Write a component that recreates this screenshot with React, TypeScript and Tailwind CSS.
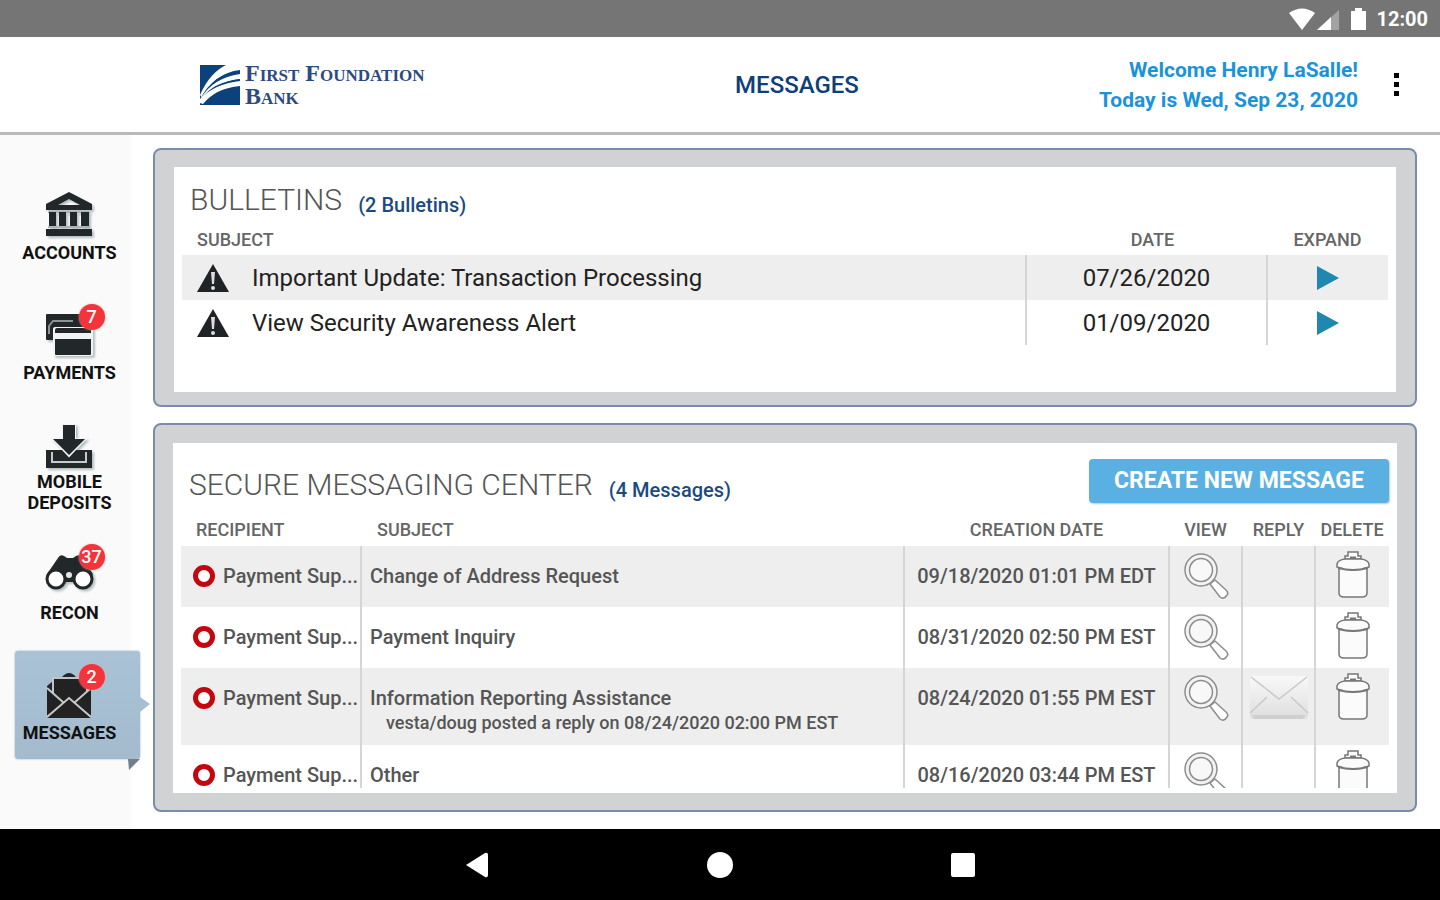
import type { ReactNode } from 'react';

const bulletins = [
  { subject: 'Important Update: Transaction Processing', date: '07/26/2020' },
  { subject: 'View Security Awareness Alert', date: '01/09/2020' },
];

const messages = [
  { recipient: 'Payment Sup...', subject: 'Change of Address Request', date: '09/18/2020 01:01 PM EDT' },
  { recipient: 'Payment Sup...', subject: 'Payment Inquiry', date: '08/31/2020 02:50 PM EST' },
  {
    recipient: 'Payment Sup...',
    subject: 'Information Reporting Assistance',
    note: 'vesta/doug posted a reply on 08/24/2020 02:00 PM EST',
    date: '08/24/2020 01:55 PM EST',
    reply: true,
  },
  { recipient: 'Payment Sup...', subject: 'Other', date: '08/16/2020 03:44 PM EST' },
];

function BankIcon() {
  return (
    <svg viewBox="0 0 50 46" className="h-[46px] w-[50px] drop-shadow-[2px_2px_1px_#b5bfc0]" fill="#22282a">
      <path fillRule="evenodd" d="M24 0 47 12v6H1v-6L24 0Zm0 7-11 6h22L24 7Z" />
      <path d="M3 19h42v2H3zM3 34h42v2H3z" fill="#aab2b3" />
      <path d="M4 20h7v14H4zM14 20h7v14h-7zM25 20h7v14h-7zM36 20h8v14h-8zM1 37h46v7H1z" />
    </svg>
  );
}

function CardsIcon() {
  return (
    <svg viewBox="0 0 50 46" className="h-[46px] w-[50px] drop-shadow-[2px_2px_1px_#b5bfc0]">
      <rect x="1" y="2" width="42" height="26" rx="1" fill="#22282a" />
      <path d="M4 22v-8l4-5h20" fill="none" stroke="#8a9294" strokeWidth="2" />
      <rect x="8" y="15" width="40" height="29" rx="2" fill="#f1f4f4" />
      <path d="M10 18q0-2 2-2h32q2 0 2 2v3H10zM10 27h36v15q0 1-1 1H11q-1 0-1-1z" fill="#22282a" />
    </svg>
  );
}

function DepositIcon() {
  return (
    <svg
      viewBox="0 0 50 46"
      className="h-[46px] w-[50px] overflow-visible drop-shadow-[2px_2px_1px_#b5bfc0]"
      fill="#22282a"
    >
      <path d="M1 29h46v18H1z" />
      <path d="M7 31v10h34V31" fill="none" stroke="#c3cbcc" strokeWidth="2" />
      <path d="M18 4h12v14h10L24 35 8 18h10z" stroke="#f4f6f6" strokeWidth="2" />
      <path d="M18 4h12v14h10L24 34 8 18h10z" />
    </svg>
  );
}

function BinocularsIcon() {
  return (
    <svg viewBox="0 0 50 46" className="h-[46px] w-[50px] drop-shadow-[2px_2px_1px_#b5bfc0]">
      <path d="M2 22 13 6q2-4 6-2l3 2h6l3-2q4-2 6 2l11 16-9 8H11z" fill="#22282a" />
      <circle cx="11" cy="27" r="9" fill="#fff" stroke="#22282a" strokeWidth="3" />
      <circle cx="38" cy="27" r="9" fill="#fff" stroke="#22282a" strokeWidth="3" />
      <circle cx="24" cy="23" r="4" fill="#e3e7e8" stroke="#22282a" strokeWidth="2" />
    </svg>
  );
}

function EnvelopeIcon() {
  return (
    <svg viewBox="0 0 50 46" className="h-[46px] w-[50px]">
      <path d="M17 5q7-8 14 0zM2 18v-4l6-5v12zM46 18v-4l-6-5v12z" fill="#22282a" />
      <path d="M8 6h34v22L24 42 8 28z" fill="#222" stroke="#bfc5c6" strokeWidth="2" />
      <path d="M2 17 19 31 2 44zM46 17 29 31l17 13z" fill="#222" />
      <path d="m2 46 22-20 22 20z" fill="#222" />
      <path d="m2 16 17 15M46 16 29 31M2 45l22-19 22 19" fill="none" stroke="#c4c8c8" strokeWidth="2" />
    </svg>
  );
}

function WarningIcon() {
  return (
    <svg viewBox="0 0 34 30" className="h-[30px] w-[34px]">
      <path d="m17 1 16 28H1z" fill="#1f2325" />
      <path d="M15 9h4l-1 12h-2z" fill="#ddd" />
      <circle cx="17" cy="25" r="2" fill="#ddd" />
    </svg>
  );
}

function MagnifierIcon() {
  return (
    <svg viewBox="0 0 46 46" className="h-[46px] w-[46px]" fill="none" stroke="#8d8d8d" strokeWidth="1.5">
      <circle cx="18" cy="17" r="16" fill="#f3f3f3" />
      <circle cx="18" cy="17" r="11.5" fill="#f8f8f8" />
      <path d="m27 31 5-4 11 10q3 3 1 5-3 5-7 2z" fill="#fff" strokeLinejoin="round" />
    </svg>
  );
}

function TrashIcon() {
  return (
    <svg viewBox="0 0 36 48" className="h-[48px] w-[36px]" fill="#fbfbfb" stroke="#777" strokeWidth="1.5">
      <path d="M4 17v25q0 4 5 4h18q5 0 5-4V17z" />
      <path d="M10 8V5h3V1h10v4h3v3z" />
      <path d="M15 7h6" strokeWidth="3" />
      <path d="M2 13q1-4 8-5h16q7 1 8 5v3q-8 3-16 3T2 16z" />
      <path d="M3 17q8 2 15 2t15-2" strokeWidth="2" />
    </svg>
  );
}

function ReplyIcon() {
  return (
    <svg viewBox="0 0 60 46" className="h-[46px] w-[60px]">
      <defs>
        <linearGradient id="paper" x1="0" y1="0" x2="0" y2="1">
          <stop offset="0" stopColor="#f8f8f8" />
          <stop offset="1" stopColor="#dedede" />
        </linearGradient>
      </defs>
      <rect x="1" y="1" width="58" height="43" rx="3" fill="url(#paper)" />
      <path d="M3 40h54l-3 4H5z" fill="#cfcfcf" />
      <path d="m2 2 28 22L58 2M1 38l17-16M59 38 42 22" fill="none" stroke="#c9c9c9" strokeWidth="1.5" />
    </svg>
  );
}

function BankLogo() {
  return (
    <div className="ml-[14px] flex items-center gap-[5px] text-[#2c4a80]">
      <svg viewBox="0 0 40 42" className="h-[42px] w-10">
        <path d="M0 1h40v40H0z" fill="#0b427c" />
        <path d="M0 31Q10 8 28 0h12v6Q14 9 2 34z" fill="#fff" />
        <path d="M1 34Q12 11 40 7v4Q14 15 2 36z" fill="#0b427c" />
        <path d="M1 34Q13 14 40 10v5Q14 18 1 38z" fill="#fff" />
        <path d="M1 35Q13 18 40 15v2Q15 21 1 38z" fill="#0b427c" />
        <path d="M0 35Q14 20 40 17v5Q16 24 3 40l-3-1z" fill="#fff" />
      </svg>
      <div className="flex flex-col font-['Liberation_Serif'] text-[24px] leading-[23px] font-bold [font-variant-caps:small-caps]">
        <span>First Foundation</span>
        <span>Bank</span>
      </div>
    </div>
  );
}

function NavItem({ label, icon, badge, active }: { label: string; icon: ReactNode; badge?: number; active?: boolean }) {
  return (
    <a
      href="#"
      aria-current={active ? 'page' : undefined}
      className={`relative flex h-[108px] w-[125px] flex-col items-center justify-center gap-1 rounded-[3px] pt-1 pr-4 text-center text-[18px] leading-[21px] font-bold text-[#111] ${
        active ? 'bg-linear-to-b from-[#a9c2d5] to-[#a3bbcd] shadow-[0_0_2px_#8fa5b5]' : ''
      }`}
    >
      <span className="relative">
        {icon}
        {badge && (
          <span className="absolute -top-2 left-[34px] flex h-[26px] w-[26px] items-center justify-center rounded-full bg-[#f5333b] text-[18px] font-medium text-white shadow-[0_0_2px_#f5a0a0]">
            {badge}
          </span>
        )}
      </span>
      <span className="w-[100px]">{label}</span>
      {active && (
        <svg viewBox="0 0 22 74" className="absolute top-[46px] left-[113px] h-[74px] w-[22px]">
          <path d="m12 0 10 7-10 8z" fill="#a5bed1" />
          <path d="M0 62h12L1 73z" fill="#6f7f8b" />
        </svg>
      )}
    </a>
  );
}

function Panel({ className, children }: { className: string; children: ReactNode }) {
  return (
    <section className={`rounded-lg border-2 border-[#7a8bab] bg-[#d0d2d3] ${className}`}>
      <div className="bg-white px-2">{children}</div>
    </section>
  );
}

export default function App() {
  return (
    <div className="flex min-h-screen flex-col bg-white font-['Roboto',sans-serif]">
      <div className="flex h-[37px] items-center justify-end bg-[#757575] pr-3 text-[20px] font-bold text-white">
        <svg viewBox="0 0 78 24" className="mr-[9px] h-6 w-[78px]" fill="#fff">
          <path d="M0 6q13-9 26 0L13 23z" />
          <path d="M28 23 50 3v20z" fill="#a2a2a2" />
          <path d="M28 23 42 10v13z" />
          <path d="M62 4h4V1h7v3h4v19H62z" />
        </svg>
        12:00
      </div>

      <header className="grid h-[98px] grid-cols-[1fr_auto_1fr] items-center border-b-[3px] border-[#b9b9b9] pr-8 pl-[186px]">
        <BankLogo />
        <h1 className="text-[24px] font-medium text-[#123e78]">MESSAGES</h1>
        <div className="flex items-center justify-end gap-[26px]">
          <p className="text-right text-[21px] leading-[30px] font-bold text-[#1c93d8]">
            Welcome Henry LaSalle!
            <br />
            Today is Wed, Sep 23, 2020
          </p>
          <button aria-label="More options" className="flex w-6 flex-col items-center gap-1">
            <span className="h-[5px] w-[5px] bg-black" />
            <span className="h-[5px] w-[5px] bg-black" />
            <span className="h-[5px] w-[5px] bg-black" />
          </button>
        </div>
      </header>

      <div className="flex flex-1">
        <nav className="flex w-[131px] shrink-0 flex-col gap-3 bg-[#fafafa] pt-9 pl-[15px]">
          <NavItem label="ACCOUNTS" icon={<BankIcon />} />
          <NavItem label="PAYMENTS" icon={<CardsIcon />} badge={7} />
          <NavItem label="MOBILE DEPOSITS" icon={<DepositIcon />} />
          <NavItem label="RECON" icon={<BinocularsIcon />} badge={37} />
          <NavItem label="MESSAGES" icon={<EnvelopeIcon />} badge={2} active />
        </nav>

        <main className="flex min-w-0 flex-1 flex-col gap-4 pt-[13px] pr-[23px] pb-[17px] pl-[22px]">
          <Panel className="px-[19px] pt-[17px] pb-[13px]">
            <div className="flex h-[60px] items-start px-2 pt-[15px]">
              <div className="flex items-end gap-4">
                <h2 className="text-[30px] leading-[36px] font-light text-[#555]">BULLETINS</h2>
                <span className="text-[20px] leading-[26px] font-medium text-[#1b4a80]">(2 Bulletins)</span>
              </div>
            </div>
            <div className="pb-[47px]">
              <table className="w-full table-fixed text-[24px] text-[#222]">
                <colgroup>
                  <col />
                  <col className="w-[241px]" />
                  <col className="w-[121px]" />
                </colgroup>
                <thead className="text-[18px] text-[#666]">
                  <tr className="h-[28px]">
                    <th className="pb-[3px] pl-[15px] text-left leading-[24px] font-medium">SUBJECT</th>
                    <th className="pb-[3px] pl-3 leading-[24px] font-medium">DATE</th>
                    <th className="pb-[3px] leading-[24px] font-medium">EXPAND</th>
                  </tr>
                </thead>
                <tbody>
                  {bulletins.map((b) => (
                    <tr key={b.subject} className="h-[45px] odd:bg-[#eee]">
                      <td className="pl-[14px]">
                        <div className="flex items-center gap-[22px]">
                          <WarningIcon />
                          {b.subject}
                        </div>
                      </td>
                      <td className="border-l-2 border-[#d5d5d5] text-center">{b.date}</td>
                      <td className="border-l-2 border-[#d5d5d5]">
                        <button aria-label={`Expand ${b.subject}`} className="mx-auto block">
                          <svg viewBox="0 0 22 24" className="h-6 w-[22px]">
                            <path d="m0 0 22 12L0 24z" fill="#1f87b0" />
                          </svg>
                        </button>
                      </td>
                    </tr>
                  ))}
                </tbody>
              </table>
            </div>
          </Panel>

          <Panel className="px-[18px] pt-[18px] pb-[17px]">
            <div className="flex h-[74px] items-start justify-between pt-4">
              <div className="flex items-end gap-4 pt-2 pl-2">
                <h2 className="text-[30px] leading-[36px] font-light text-[#555]">SECURE MESSAGING CENTER</h2>
                <span className="text-[20px] leading-[26px] font-medium text-[#1b4a80]">(4 Messages)</span>
              </div>
              <button className="h-[44px] w-[300px] rounded bg-[#5bb0e3] text-[23px] font-bold text-white shadow-[1px_1px_2px_#b8cbd8]">
                CREATE NEW MESSAGE
              </button>
            </div>
            <div className="h-[271px] overflow-hidden">
              <table className="w-full table-fixed text-[20px] font-medium text-[#555]">
                <colgroup>
                  <col className="w-[180px]" />
                  <col />
                  <col className="w-[265px]" />
                  <col className="w-[73px]" />
                  <col className="w-[73px]" />
                  <col className="w-[74px]" />
                </colgroup>
                <thead className="text-[18px] text-[#666]">
                  <tr className="h-[29px]">
                    <th className="pb-[3px] pl-[15px] text-left leading-[24px] font-medium">RECIPIENT</th>
                    <th className="pb-[3px] pl-4 text-left leading-[24px] font-medium">SUBJECT</th>
                    <th className="pb-[3px] leading-[24px] font-medium">CREATION DATE</th>
                    <th className="pb-[3px] leading-[24px] font-medium">VIEW</th>
                    <th className="pb-[3px] leading-[24px] font-medium">REPLY</th>
                    <th className="pb-[3px] leading-[24px] font-medium">DELETE</th>
                  </tr>
                </thead>
                <tbody className="align-top">
                  {messages.map((m) => (
                    <tr key={m.subject} className={m.note ? 'h-[77px] bg-[#eee]' : 'h-[61px] odd:bg-[#eee]'}>
                      <td className="pt-4 pl-3">
                        <div className="flex items-center gap-2">
                          <span className="h-[22px] w-[22px] shrink-0 rounded-full border-[5px] border-[#c4060f] bg-white" />
                          <span className="leading-[28px] whitespace-nowrap">{m.recipient}</span>
                        </div>
                      </td>
                      <td className="border-l-2 border-[#d5d5d5] pt-4 pl-2 leading-[28px]">
                        {m.subject}
                        {m.note && <div className="pl-4 text-[18px] leading-[22px]">{m.note}</div>}
                      </td>
                      <td className="border-l-2 border-[#d5d5d5] pt-4 text-center leading-[28px]">{m.date}</td>
                      <td className="border-l-2 border-[#d5d5d5] pt-[7px]">
                        <button aria-label={`View ${m.subject}`} className="mx-auto block">
                          <MagnifierIcon />
                        </button>
                      </td>
                      <td className="border-l-2 border-[#d5d5d5] pt-[7px]">
                        {m.reply && (
                          <button aria-label={`Reply to ${m.subject}`} className="mx-auto block">
                            <ReplyIcon />
                          </button>
                        )}
                      </td>
                      <td className="border-l-2 border-[#d5d5d5] pt-[5px]">
                        <button aria-label={`Delete ${m.subject}`} className="mx-auto block">
                          <TrashIcon />
                        </button>
                      </td>
                    </tr>
                  ))}
                </tbody>
              </table>
            </div>
            <div className="h-[5px]" />
          </Panel>
        </main>
      </div>

      <footer className="flex h-[71px] items-center justify-center bg-black">
        <button aria-label="Back" className="flex w-[243px] justify-center">
          <svg viewBox="0 0 22 26" className="h-[26px] w-[22px]" fill="#fff">
            <path d="M0 13 19 1q3-1 3 2v20q0 3-3 2z" />
          </svg>
        </button>
        <button aria-label="Home" className="flex w-[243px] justify-center">
          <span className="h-[26px] w-[26px] rounded-full bg-white" />
        </button>
        <button aria-label="Recent apps" className="flex w-[243px] justify-center">
          <span className="h-6 w-6 rounded-[2px] bg-white" />
        </button>
      </footer>
    </div>
  );
}
